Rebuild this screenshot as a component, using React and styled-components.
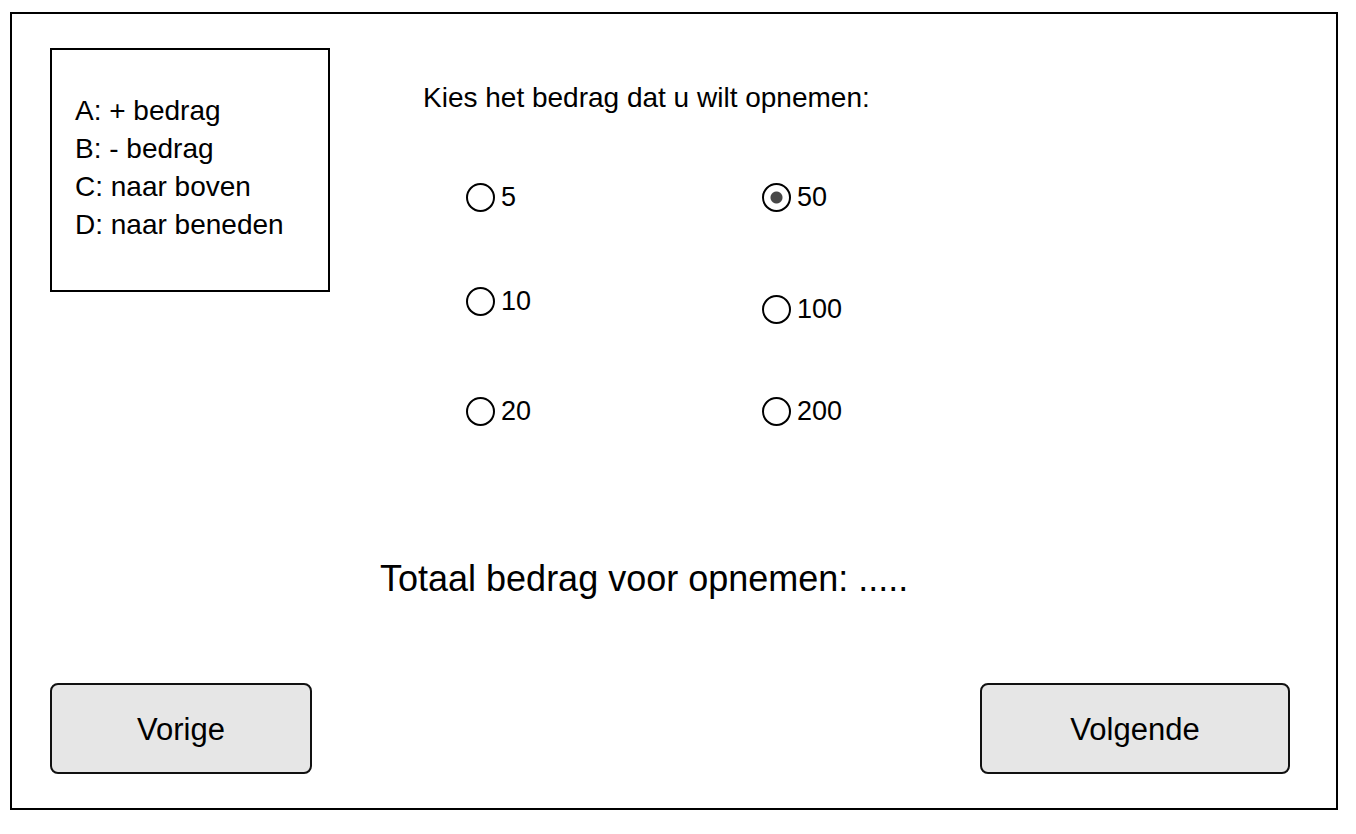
import React from 'react';
import styled, { createGlobalStyle } from 'styled-components';

const GlobalStyle = createGlobalStyle`
  body {
    margin: 0;
    background: #fff;
    font-family: "Liberation Sans", Arial, Helvetica, sans-serif;
    color: #000;
  }
  #root {
    padding: 12px 0 0 10px;
  }
`

const Frame = styled.div`
  box-sizing: border-box;
  width: 1328px;
  height: 798px;
  border: 2px solid #000;
  padding: 34px 46px 34px 38px;
  display: flex;
  flex-direction: column;
`

const Top = styled.div`
  display: flex;
  align-items: flex-start;
`

const Legend = styled.div`
  box-sizing: border-box;
  width: 280px;
  height: 244px;
  border: 2px solid #000;
  padding: 42px 0 0 23px;
  font-size: 28px;
  line-height: 38px;
`

const Main = styled.div`
  margin-left: 93px;
  padding-top: 34px;
`

const Heading = styled.div`
  font-size: 28px;
  line-height: 32px;
  white-space: nowrap;
`

const Options = styled.div`
  display: flex;
  margin: 68px 0 0 43px;
`

const Column = styled.div`
  display: flex;
  flex-direction: column;
  width: ${p => p.$width}px;
`

const Option = styled.label`
  display: flex;
  align-items: center;
  gap: 6px;
  height: 30px;
  margin-top: ${p => p.$top}px;
  font-size: 27px;
  line-height: 30px;
  cursor: pointer;
`

const Radio = styled.input.attrs({ type: 'radio' })`
  appearance: none;
  box-sizing: border-box;
  width: 29px;
  height: 29px;
  margin: 0;
  border: 2px solid #000;
  border-radius: 50%;
  background: #fff;
  &:checked {
    background: radial-gradient(circle, #474747 0 5.5px, #fff 6.5px);
  }
`

const Total = styled.div`
  margin: 132px 0 0 330px;
  font-size: 36px;
  line-height: 42px;
  white-space: nowrap;
`

const Buttons = styled.div`
  margin-top: auto;
  display: flex;
  justify-content: space-between;
`

const Button = styled.button`
  box-sizing: border-box;
  width: ${p => p.$width}px;
  height: 91px;
  border: 2px solid #111;
  border-radius: 8px;
  background: #e6e6e6;
  font-family: "Liberation Sans", Arial, Helvetica, sans-serif;
  font-size: 31px;
  line-height: 36px;
  padding: 2px 0 0;
  color: #000;
  cursor: pointer;
`

const left = [
  { value: 5, top: 0 },
  { value: 10, top: 74 },
  { value: 20, top: 80 },
]

const right = [
  { value: 50, top: 0 },
  { value: 100, top: 82 },
  { value: 200, top: 72 },
]

export default function App() {
  const [amount, setAmount] = React.useState(50);

  const renderColumn = (items, width) => (
    <Column $width={width}>
      {items.map(item => (
        <Option key={item.value} $top={item.top}>
          <Radio
            name="bedrag"
            checked={amount === item.value}
            onChange={() => setAmount(item.value)}
          />
          {item.value}
        </Option>
      ))}
    </Column>
  );

  return (
    <>
      <GlobalStyle />
      <Frame>
        <Top>
          <Legend>
            <div>A: + bedrag</div>
            <div>B: - bedrag</div>
            <div>C: naar boven</div>
            <div>D: naar beneden</div>
          </Legend>
          <Main>
            <Heading>Kies het bedrag dat u wilt opnemen:</Heading>
            <Options>
              {renderColumn(left, 296)}
              {renderColumn(right, 200)}
            </Options>
          </Main>
        </Top>
        <Total>Totaal bedrag voor opnemen: .....</Total>
        <Buttons>
          <Button $width={262}>Vorige</Button>
          <Button $width={310}>Volgende</Button>
        </Buttons>
      </Frame>
    </>
  );
}
